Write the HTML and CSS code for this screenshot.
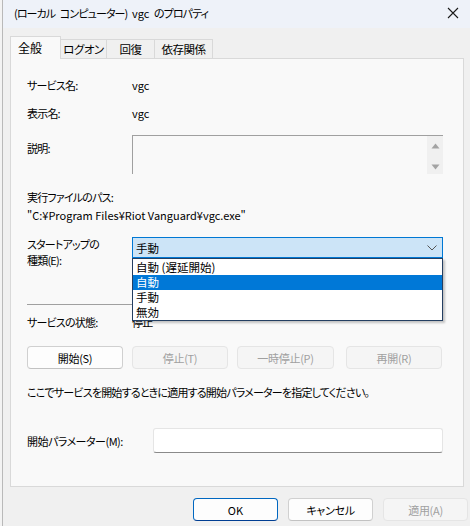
FILE: index.html
```html
<!DOCTYPE html>
<html lang="ja">
<head>
<meta charset="utf-8">
<title>(ローカル コンピューター) vgc のプロパティ</title>
<link rel="stylesheet" href="styles.css">
</head>
<body>
<div class="window">
  <div class="titlebar">
    <span class="title">(ローカル コンピューター) <span class="latin">vgc</span> のプロパティ</span>
    <svg class="close" width="12" height="12" viewBox="0 0 12 12"><path d="M1 1 L11 11 M11 1 L1 11" stroke="#1a1a1a" stroke-width="1.1" fill="none"/></svg>
  </div>
  <div class="content">
    <div class="tabs">
      <div class="tab active">全般</div>
      <div class="tab t-logon">ログオン</div>
      <div class="tab t-recover">回復</div>
      <div class="tab t-dep">依存関係</div>
    </div>
    <div class="panel">
      <div class="row r1"><span class="label">サービス名:</span><span class="value latin">vgc</span></div>
      <div class="row r2"><span class="label">表示名:</span><span class="value latin">vgc</span></div>
      <div class="row r3">
        <span class="label desc-label">説明:</span>
        <div class="descbox">
          <div class="desc-text"></div>
          <div class="scrollbar">
            <svg width="9" height="6" viewBox="0 0 9 6"><path d="M0.5 5.5 L4.5 0.5 L8.5 5.5 Z" fill="#a3a3a3"/></svg>
            <svg width="9" height="6" viewBox="0 0 9 6"><path d="M0.5 0.5 L4.5 5.5 L8.5 0.5 Z" fill="#a3a3a3"/></svg>
          </div>
        </div>
      </div>
      <div class="row r4"><span>実行ファイルのパス:</span></div>
      <div class="row r5"><span class="latin">"C:¥Program Files¥Riot Vanguard¥vgc.exe"</span></div>
      <div class="row r6">
        <span class="label two-line">スタートアップの<br>種類(E):</span>
        <div class="combo-wrap">
          <div class="combo">
            <span>手動</span>
            <svg class="chev" width="10" height="6" viewBox="0 0 10 6"><path d="M0.5 0.5 L5 5 L9.5 0.5" stroke="#555" stroke-width="1" fill="none"/></svg>
          </div>
          <ul class="dropdown">
            <li>自動 (遅延開始)</li>
            <li class="sel">自動</li>
            <li>手動</li>
            <li>無効</li>
          </ul>
        </div>
      </div>
      <div class="separator"></div>
      <div class="row r7"><span class="label">サービスの状態:</span><span class="value">停止</span></div>
      <div class="svc-buttons">
        <button class="btn b-start">開始(S)</button>
        <button class="btn disabled b-stop">停止(T)</button>
        <button class="btn disabled b-pause">一時停止(P)</button>
        <button class="btn disabled b-resume">再開(R)</button>
      </div>
      <div class="row r8"><span>ここでサービスを開始するときに適用する開始パラメーターを指定してください。</span></div>
      <div class="row r9">
        <span class="label param-label">開始パラメーター(M):</span>
        <div class="param-input"></div>
      </div>
    </div>
    <div class="footer">
      <button class="btn fbtn default"><span class="latin">OK</span></button>
      <button class="btn fbtn">キャンセル</button>
      <button class="btn fbtn disabled">適用(A)</button>
    </div>
  </div>
</div>
</body>
</html>
```
FILE: styles.css
```css
* { box-sizing: border-box; }
html, body {
  margin: 0;
  padding: 0;
  width: 470px;
  height: 526px;
  overflow: hidden;
  background: #f3f3f3;
}
body {
  font-family: "Noto Sans CJK JP", "Noto Sans", sans-serif;
  font-size: 11px;
  color: #000;
  font-feature-settings: "palt" 1;
  letter-spacing: -0.8px;
}
.latin { letter-spacing: 0; }
.window {
  margin-left: 2px;
  border-left: 1px solid #b9b9b9;
  height: 526px;
  background: #f0f0f0;
}
.titlebar {
  height: 28px;
  background: #eef2f9;
  display: flex;
  align-items: center;
  justify-content: space-between;
  padding: 0 11px 3px 11px;
}
.title {
  font-size: 11px;
  line-height: 16px;
  color: #000;
  letter-spacing: -0.9px;
  word-spacing: 3px;
}
.close { display: block; }
.content {
  padding: 8px 0 0 7px;
}
.tabs {
  display: flex;
  align-items: flex-end;
  height: 22px;
  position: relative;
  z-index: 2;
}
.tab {
  height: 19px;
  line-height: 18px;
  text-align: center;
  background: #f0f0f0;
  border-top: 1px solid #d9d9d9;
  border-right: 1px solid #d9d9d9;
  color: #000;
  font-size: 11.5px;
  letter-spacing: -0.5px;
}
.tab.active {
  width: 51px;
  height: 23px;
  line-height: 22px;
  margin-bottom: -1px;
  background: #f9f9f9;
  border: 1px solid #d9d9d9;
  border-bottom: none;
  text-align: left;
  padding-left: 7px;
  font-size: 12px;
  letter-spacing: 0;
}
.t-logon { width: 46px; }
.t-recover { width: 48px; }
.t-dep { width: 58px; }
.panel {
  width: 454px;
  height: 429px;
  background: #f9f9f9;
  border: 1px solid #d9d9d9;
  padding: 18px 0 0 16px;
  position: relative;
  z-index: 1;
}
.row {
  display: flex;
  line-height: 16px;
}
.label {
  width: 105px;
  flex: none;
}
.r1 { height: 16px; }
.r2 { margin-top: 12px; height: 16px; }
.r3 { margin-top: 14px; height: 39px; }
.desc-label { margin-top: 5px; }
.descbox {
  width: 311px;
  height: 39px;
  display: flex;
  border-top: 1px solid #a0a0a0;
  border-left: 1px solid #a0a0a0;
  background: #f9f9f9;
}
.desc-text { flex: 1; }
.scrollbar {
  width: 16px;
  background: #f0f0f0;
  display: flex;
  flex-direction: column;
  align-items: center;
  justify-content: space-between;
  padding: 7px 0 4px;
}
.scrollbar svg { display: block; }
.r4 { margin-top: 15px; }
.r5 { margin-top: 2px; }
.r6 { margin-top: 13px; height: 32px; }
.two-line { line-height: 16px; }
.combo-wrap {
  position: relative;
  width: 311px;
  margin-top: 1px;
}
.combo {
  height: 21px;
  background: #cce4f7;
  border: 1px solid #0078d4;
  display: flex;
  align-items: center;
  justify-content: space-between;
  padding: 0 5px 0 3px;
  font-size: 11.5px;
  letter-spacing: 0;
}
.chev { display: block; margin-top: 1px; }
.dropdown {
  position: absolute;
  top: 21px;
  left: 0;
  width: 311px;
  margin: 0;
  padding: 0;
  list-style: none;
  background: #fff;
  border: 1px solid #243f62;
  box-shadow: 2px 2px 2px rgba(0,0,0,0.22);
  z-index: 5;
  font-size: 11.5px;
  letter-spacing: 0;
}
.dropdown li {
  height: 15px;
  line-height: 15px;
  padding-left: 3px;
}
.dropdown li:first-child { height: 16px; line-height: 17px; }
.dropdown li.sel {
  background: #0078d7;
  color: #fff;
}
.separator {
  margin-top: 36px;
  width: 416px;
  height: 1px;
  background: #a0a0a0;
}
.r7 { margin-top: 9px; }
.svc-buttons {
  display: flex;
  margin-top: 16px;
  height: 23px;
}
.btn {
  font-family: inherit;
  font-size: 11px;
  font-feature-settings: "palt" 1;
  letter-spacing: -0.3px;
  color: #000;
  background: #fdfdfd;
  border: 1px solid #d0d0d0;
  border-bottom-color: #c2c2c2;
  border-radius: 4px;
  padding: 0;
  margin: 0;
  height: 23px;
  line-height: 20px;
}
.btn.disabled {
  color: #a0a0a0;
  background: #f5f5f5;
  border-color: #e5e5e5;
}
.b-start { width: 96px; }
.b-stop { width: 96px; margin-left: 9px; }
.b-pause { width: 97px; margin-left: 9px; }
.b-resume { width: 96px; margin-left: 12px; }
.r8 { margin-top: 15px; }
.r9 { margin-top: 28px; align-items: center; height: 25px; }
.param-label { width: 126px; letter-spacing: -0.5px; }
.param-input {
  width: 290px;
  height: 25px;
  background: #fff;
  border: 1px solid #e5e5e5;
  border-bottom: 1px solid #8a8a8a;
  border-radius: 3px;
}
.footer {
  display: flex;
  justify-content: flex-end;
  padding-right: 2px;
  margin-top: 11px;
}
.fbtn {
  width: 85px;
  height: 23px;
  margin-left: 10px;
}
.fbtn.default {
  border: 1px solid #0067c0;
  border-bottom-color: #003e92;
}
```
